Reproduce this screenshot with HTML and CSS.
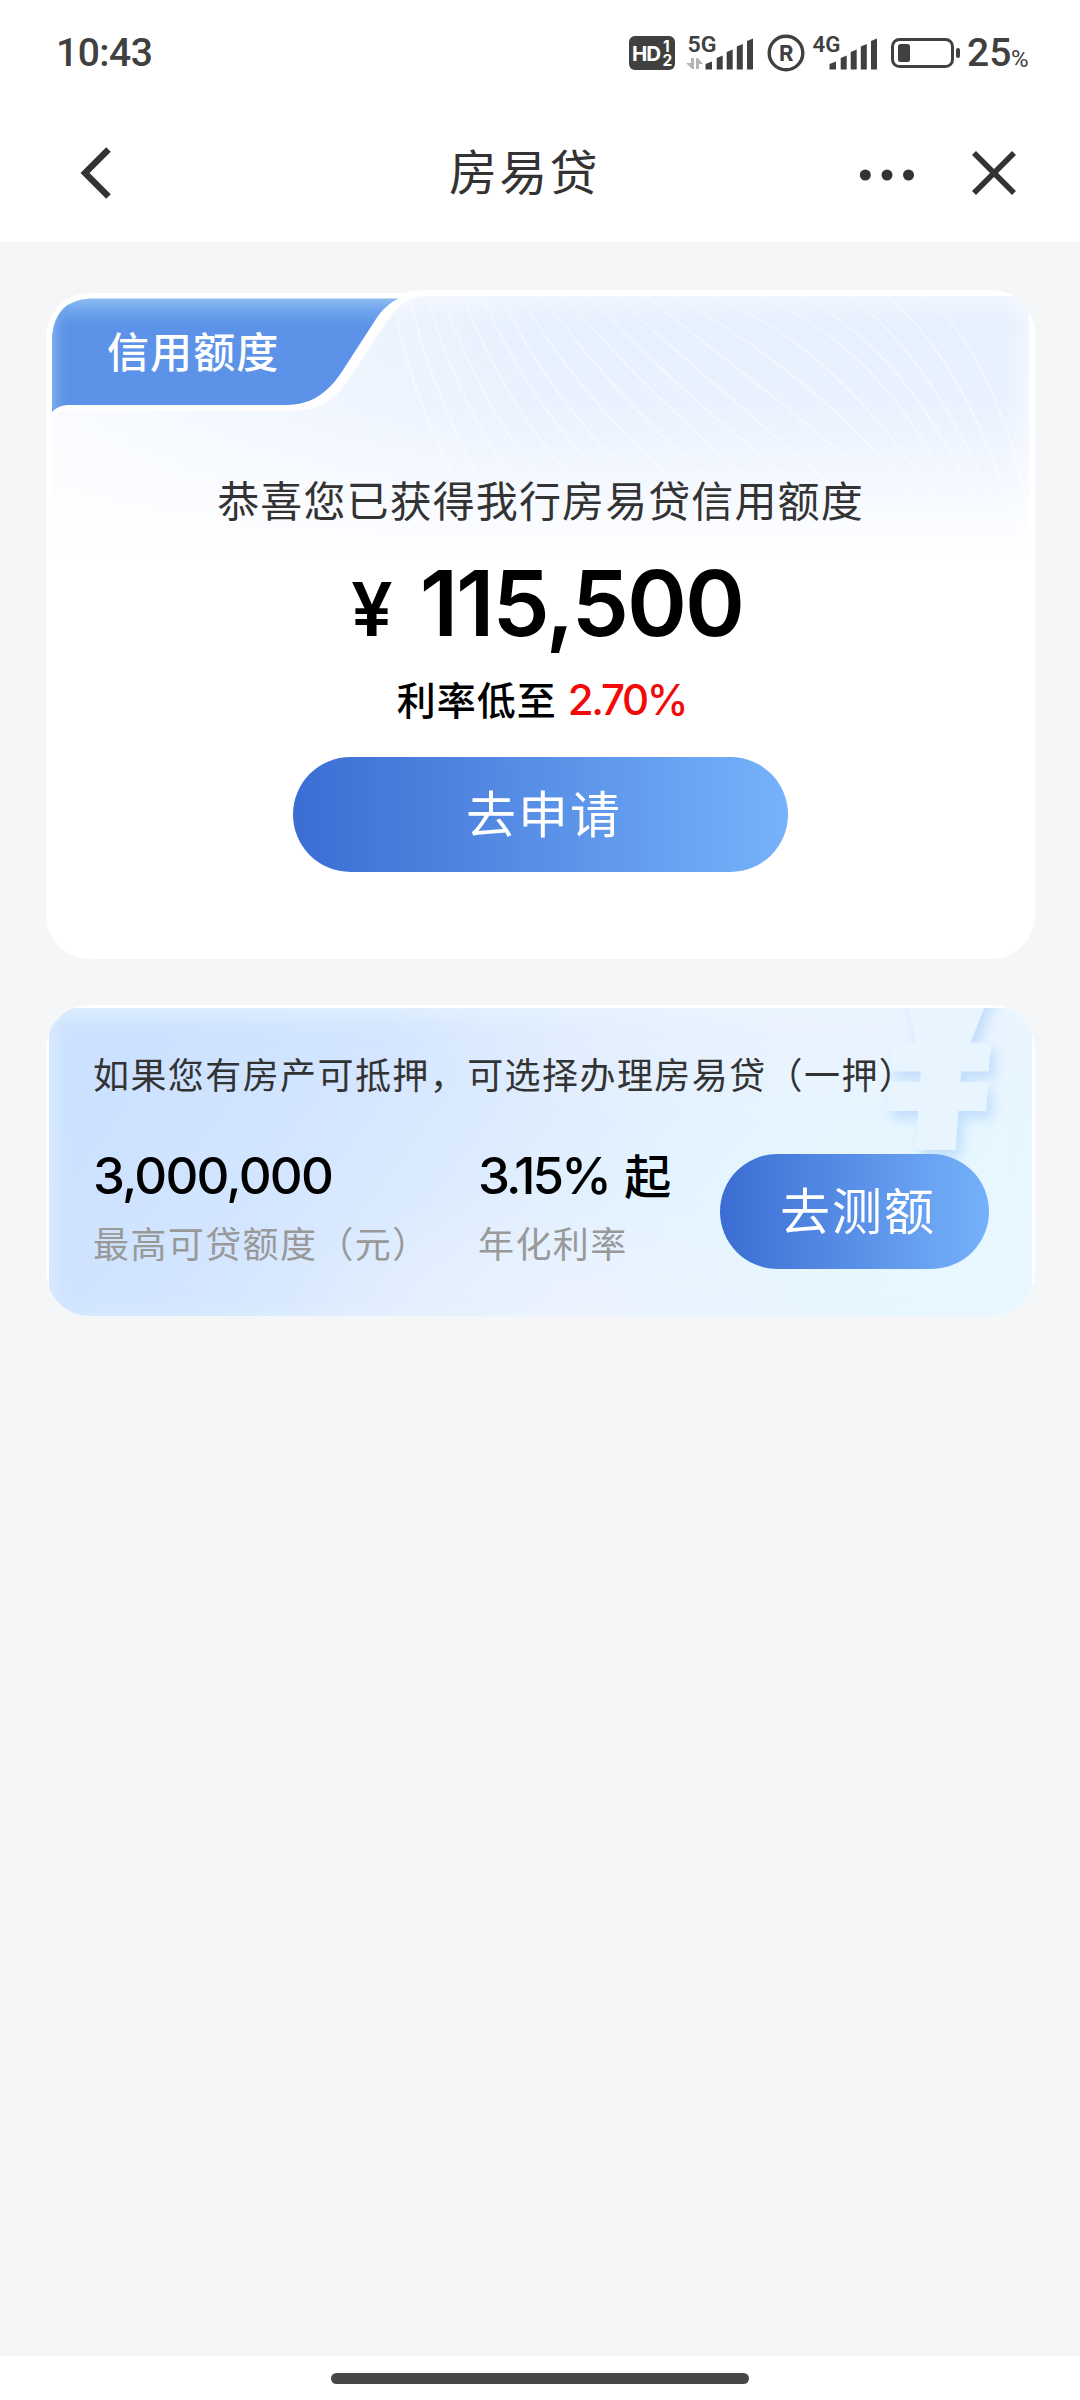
FILE: index.html
```html
<!DOCTYPE html>
<html lang="zh-CN">
<head>
<meta charset="utf-8">
<title>房易贷</title>
<link rel="stylesheet" href="styles.css">
</head>
<body>
<div class="screen">
  <header class="status">
    <span class="clock">10:43</span>
    <div class="indicators">
      <svg class="hd" width="46" height="34" viewBox="0 0 46 34">
        <rect width="46" height="34" rx="6" fill="#404040"/>
        <text x="3" y="24.5" font-size="20.5" font-weight="700" textLength="29">HD</text>
        <text x="34" y="15.5" font-size="15.5" font-weight="700">1</text>
        <text x="33.5" y="30" font-size="15.5" font-weight="700">2</text>
      </svg>
      <svg class="sig5" width="68" height="36" viewBox="686 33 68 36">
        <text class="net" x="687.5" y="50" textLength="29" lengthAdjust="spacingAndGlyphs">5G</text>
        <path fill="#b5b5b5" d="M691 56h3v11h-2l-6-6h5zM696 56h2l5 6h-4v5h-3z"/>
        <path fill="#404040" d="M705.5 62l6.500-2.500v8h-6.500zM716.700 56l6-2.500v14h-6zM726.700 50l6-2.500v20h-6zM736.800 44.500l6-2.500v25.500h-6zM747 39l6-2.500v31h-6z"/>
      </svg>
      <svg class="reg" width="38" height="38" viewBox="0 0 38 38">
        <circle cx="19" cy="19" r="16.800" fill="none" stroke="#404040" stroke-width="3.400"/>
        <text x="12" y="27" font-size="22" font-weight="700" fill="#404040">R</text>
      </svg>
      <svg class="sig4" width="66" height="36" viewBox="812 33 66 36">
        <text class="net" x="812.5" y="50" textLength="28" lengthAdjust="spacingAndGlyphs">4G</text>
        <path fill="#404040" d="M829.500 62l6.500-2.500v8h-6.500zM840.700 56l6-2.500v14h-6zM850.700 50l6-2.500v20h-6zM860.800 44.500l6-2.500v25.500h-6zM871 39l6-2.500v31h-6z"/>
      </svg>
      <svg class="battery" width="70" height="32" viewBox="0 0 70 32">
        <rect x="1.500" y="2.500" width="60" height="27" rx="7" fill="none" stroke="#404040" stroke-width="3"/>
        <rect x="7" y="7" width="12" height="18" rx="2.500" fill="#404040"/>
        <rect x="65" y="11" width="4" height="10" rx="2" fill="#404040"/>
      </svg>
      <span class="level">25</span><span class="pct">%</span>
    </div>
  </header>
  <nav class="titlebar">
    <svg class="back" width="34" height="54" viewBox="0 0 34 54" fill="none" stroke="#333" stroke-width="6.400"><path d="M29.500 3.500L6 27l23.500 23.500"/></svg>
    <h1>房易贷</h1>
    <svg class="more" width="56" height="12" viewBox="0 0 56 12" fill="#333"><circle cx="6.300" cy="6" r="5.500"/><circle cx="28" cy="6" r="5.500"/><circle cx="49.500" cy="6" r="5.500"/></svg>
    <svg class="close" width="44" height="44" viewBox="0 0 44 44" stroke="#333" stroke-width="5.600"><path d="M2 2l40 40M42 2L2 42"/></svg>
  </nav>
  <main>
    <section class="credit">
      <svg class="art" width="989" height="280" viewBox="46 290 989 280">
        <defs>
          <linearGradient id="sky" x1="0" y1="296" x2="0" y2="570" gradientUnits="userSpaceOnUse">
            <stop offset="0" stop-color="#f0f5ff"/><stop offset=".1" stop-color="#e7f0fe"/><stop offset=".4" stop-color="#eaf2ff"/><stop offset=".68" stop-color="#f4f8ff"/><stop offset=".95" stop-color="#fff"/>
          </linearGradient>
          <linearGradient id="veil"><stop offset="0" stop-color="#fff" stop-opacity=".75"/><stop offset=".3" stop-color="#fff" stop-opacity=".3"/><stop offset=".5" stop-color="#fff" stop-opacity="0"/><stop offset=".975" stop-color="#fff" stop-opacity="0"/><stop offset="1" stop-color="#fff" stop-opacity=".4"/></linearGradient>
          <linearGradient id="tab" x1="0" y1="298" x2="0" y2="405" gradientUnits="userSpaceOnUse"><stop offset="0" stop-color="#8fbdf3"/><stop offset=".12" stop-color="#6fa3ed"/><stop offset=".26" stop-color="#5c93e8"/></linearGradient>
          <linearGradient id="tabside" x1="52" y1="0" x2="70" y2="0" gradientUnits="userSpaceOnUse"><stop offset="0" stop-color="#93c0f4" stop-opacity=".6"/><stop offset="1" stop-color="#5c93e8" stop-opacity="0"/></linearGradient>
          <linearGradient id="fade" x1="0" y1="296" x2="0" y2="560" gradientUnits="userSpaceOnUse"><stop offset="0" stop-color="#fff" stop-opacity=".25"/><stop offset=".2" stop-color="#fff" stop-opacity=".5"/><stop offset="1" stop-color="#fff" stop-opacity=".4"/></linearGradient>
          <clipPath id="outer"><path d="M46 570V337a44 44 0 0 1 44-44H405Q414 290 428 290H991a44 44 0 0 1 44 44V570z"/></clipPath>
          <clipPath id="panel"><path d="M52 570V422Q55 411 68 411H290C325 411 338 395 350 378L384 326C398 305 408 296 428 296H1029V570z"/></clipPath>
        </defs>
        <g clip-path="url(#outer)">
          <rect x="46" y="290" width="989" height="280" fill="#fff"/>
          <g clip-path="url(#panel)">
            <rect x="46" y="290" width="989" height="280" fill="url(#sky)"/>
            <rect x="52" y="290" width="977" height="280" fill="url(#veil)"/>
            <g fill="none" stroke="url(#fade)" stroke-width="1.700">
              <path d="M393 300Q408 385 452 473"/><path d="M409 296Q430 385 476 473"/><path d="M426 296Q452 385 507 473"/><path d="M443 296Q474 390 533 470"/>
              <path d="M463 296Q500 395 567 473"/><path d="M482 296Q522 390 596 470"/><path d="M501 296Q548 395 628 473"/><path d="M520 296Q575 390 665 473"/>
              <path d="M543 296Q600 380 706 477"/><path d="M565 296Q625 370 745 477"/><path d="M590 296Q655 370 790 480"/><path d="M618 296C670 350 760 420 830 485"/>
              <path d="M647 296C710 350 790 405 870 480"/><path d="M678 296C760 350 840 400 915 500"/><path d="M716 296C800 335 870 395 950 520"/><path d="M760 296C850 335 910 400 970 527"/>
              <path d="M803 296C890 345 940 420 990 533"/><path d="M850 296C910 340 960 420 1006 533"/><path d="M888 296C950 350 985 430 1020 533"/><path d="M927 296C985 350 1010 430 1032 520"/>
              <path d="M940 540L1030 502"/><path d="M950 550L1030 516"/><path d="M965 556L1030 531"/>
            </g>
          </g>
          <path d="M52 412V337Q55 300 90 298.500H398.500C388 304 382 310 376 319L343 370C330 390 314 405 286 405H68Q58 405 52 412z" fill="url(#tab)"/>
          <path d="M52 412V337Q55 300 90 298.500V405H68Q58 405 52 412z" fill="url(#tabside)"/>
        </g>
      </svg>
      <h2>信用额度</h2>
      <p class="congrats">恭喜您已获得我行房易贷信用额度</p>
      <p class="amount"><span class="yen">¥</span><span class="sum">115,500</span></p>
      <p class="rate">利率低至<span class="ratenum">2.70%</span></p>
      <button class="btn apply">去申请</button>
    </section>
    <section class="mortgage">
      <div class="backdrop"><span class="mark">¥</span></div>
      <p class="hint">如果您有房产可抵押，可选择办理房易贷（一押）</p>
      <div class="facts">
        <div class="fact limit"><strong>3,000,000</strong><span>最高可贷额度（元）</span></div>
        <div class="fact year"><strong><span class="n">3.15%</span><span class="from">起</span></strong><span>年化利率</span></div>
        <button class="btn measure">去测额</button>
      </div>
    </section>
  </main>
  <footer><div class="home"></div></footer>
</div>
</body>
</html>
```
FILE: styles.css
```css
* { box-sizing: border-box; margin: 0; padding: 0; }
body {
  width: 1080px;
  background: #f4f6f8;
  font-family: Inter, "Noto Sans CJK SC", sans-serif;
  color: #333;
}
svg { display: block; flex: none; overflow: visible; }
.screen { width: 1080px; height: 2400px; display: flex; flex-direction: column; overflow: hidden; }
.status {
  height: 104px;
  padding: 1px 49px 0 56px;
  display: flex;
  justify-content: space-between;
  align-items: center;
  background: #fff;
  color: #404040;
}
.clock { font: 500 39px/48px Roboto, sans-serif; letter-spacing: -.5px; padding-top: 1px; }
.indicators { display: flex; align-items: center; font-family: Roboto, sans-serif; }
.hd { fill: #fff; font-family: Inter, sans-serif; }
.sig5 { margin-left: 11px; }
.net { font: 600 22px Roboto, sans-serif; fill: #404040; }
.reg { margin-left: 12.5px; font-family: Inter, sans-serif; }
.sig4 { margin-left: 7.5px; }
.battery { margin-left: 13px; }
.level { margin-left: 6px; width: 44px; font-size: 39px; font-weight: 500; line-height: 48px; }
.pct { width: 20px; font-size: 24px; align-self: flex-end; line-height: 36px; }
.titlebar { height: 138px; display: flex; align-items: center; background: #fff; }
.back { margin-left: 79px; }
h1 { margin-left: 336px; width: 150px; font-size: 48px; font-weight: 400; letter-spacing: 2.3px; line-height: 70px; white-space: nowrap; }
.more { margin-left: 260px; margin-top: 3px; }
.close { margin-left: 57px; }
main { flex: 1; padding: 48px 45px 0 46px; display: flex; flex-direction: column; gap: 46px; }
.credit {
  position: relative;
  height: 669px;
  border-radius: 0 0 44px 44px;
  background: linear-gradient(#fff, #fff) 0 279px / 100% 390px no-repeat;
  display: flex;
  flex-direction: column;
  align-items: center;
}
.art { position: absolute; left: 0; top: 0; z-index: 0; }
.credit > :not(.art) { position: relative; z-index: 1; }
h2 { align-self: flex-start; margin: 33px 0 0 61px; font-size: 42px; font-weight: 500; letter-spacing: 1.1px; line-height: 60px; color: #fff; }
.congrats { margin-top: 89px; font-size: 42px; line-height: 60px; letter-spacing: 1.1px; white-space: nowrap; }
.amount { margin-top: 26px; height: 90px; display: flex; align-items: baseline; color: #000; font-weight: 600; line-height: 90px; padding-left: 13px; }
.yen { font-size: 74px; }
.sum { margin-left: 27px; font-size: 91px; letter-spacing: -2px; }
.rate { margin-top: 22px; height: 60px; display: flex; align-items: baseline; font-size: 39px; font-weight: 500; line-height: 60px; letter-spacing: 1px; color: #000; padding-left: 2px; }
.ratenum { margin-left: 11px; font-size: 42px; color: #f00a0a; letter-spacing: -2.3px; }
.btn { border: 0; border-radius: 58px; height: 115px; padding: 1px 0 0 7px; font: 400 50px/114px Inter, "Noto Sans CJK SC", sans-serif; letter-spacing: 2px; color: #fff; background: linear-gradient(90deg, #3b6dd3, #76b2fb); }
.apply { width: 495px; margin-top: 27px; }
.mortgage { position: relative; height: 311px; border-radius: 44px; overflow: hidden; background: #fff; padding: 45px 46px 0 47px; display: flex; flex-direction: column; }
.backdrop {
  position: absolute;
  inset: 3px 3px 0;
  overflow: hidden;
  background:
    radial-gradient(ellipse 420px 130px at 760px 0, rgba(238,242,255,.8), rgba(238,242,255,0)),
    radial-gradient(ellipse 300px 130px at 530px 100%, rgba(238,242,255,.8), rgba(238,242,255,0)),
    linear-gradient(126deg, #cbe1ff 8%, #d4e6ff 30%, #e0eefe 50%, #e4f5ff 65%, #e9f8ff 100%);
  box-shadow: inset 0 6px 26px rgba(232,246,255,.8);
}
.mark { position: absolute; left: 812px; top: -99px; font: 900 280px/280px Inter, sans-serif; color: #e8f5ff; text-shadow: 8px 8px 14px rgba(140,190,245,.4); transform: skewX(-4deg) scaleX(.74); }
.hint, .facts { position: relative; }
.hint { font-size: 36px; line-height: 52px; letter-spacing: 1.42px; white-space: nowrap; }
.facts { display: flex; margin-top: 30px; }
.fact { display: flex; flex-direction: column; color: #999; font-size: 36px; letter-spacing: 1.4px; line-height: 52px; white-space: nowrap; }
.fact strong { display: flex; align-items: baseline; height: 87px; line-height: 88px; font-size: 51px; font-weight: 500; letter-spacing: -1.8px; color: #000; }
.limit { width: 385px; }
.year .n { letter-spacing: -2.8px; }
.from { margin-left: 15px; font-size: 47px; }
.year { width: 242px; }
.measure { width: 269px; margin-top: 22px; }
footer { height: 44px; background: #fff; display: flex; justify-content: center; padding-top: 17px; }
.home { width: 418px; height: 11px; border-radius: 6px; background: #474747; }
```
